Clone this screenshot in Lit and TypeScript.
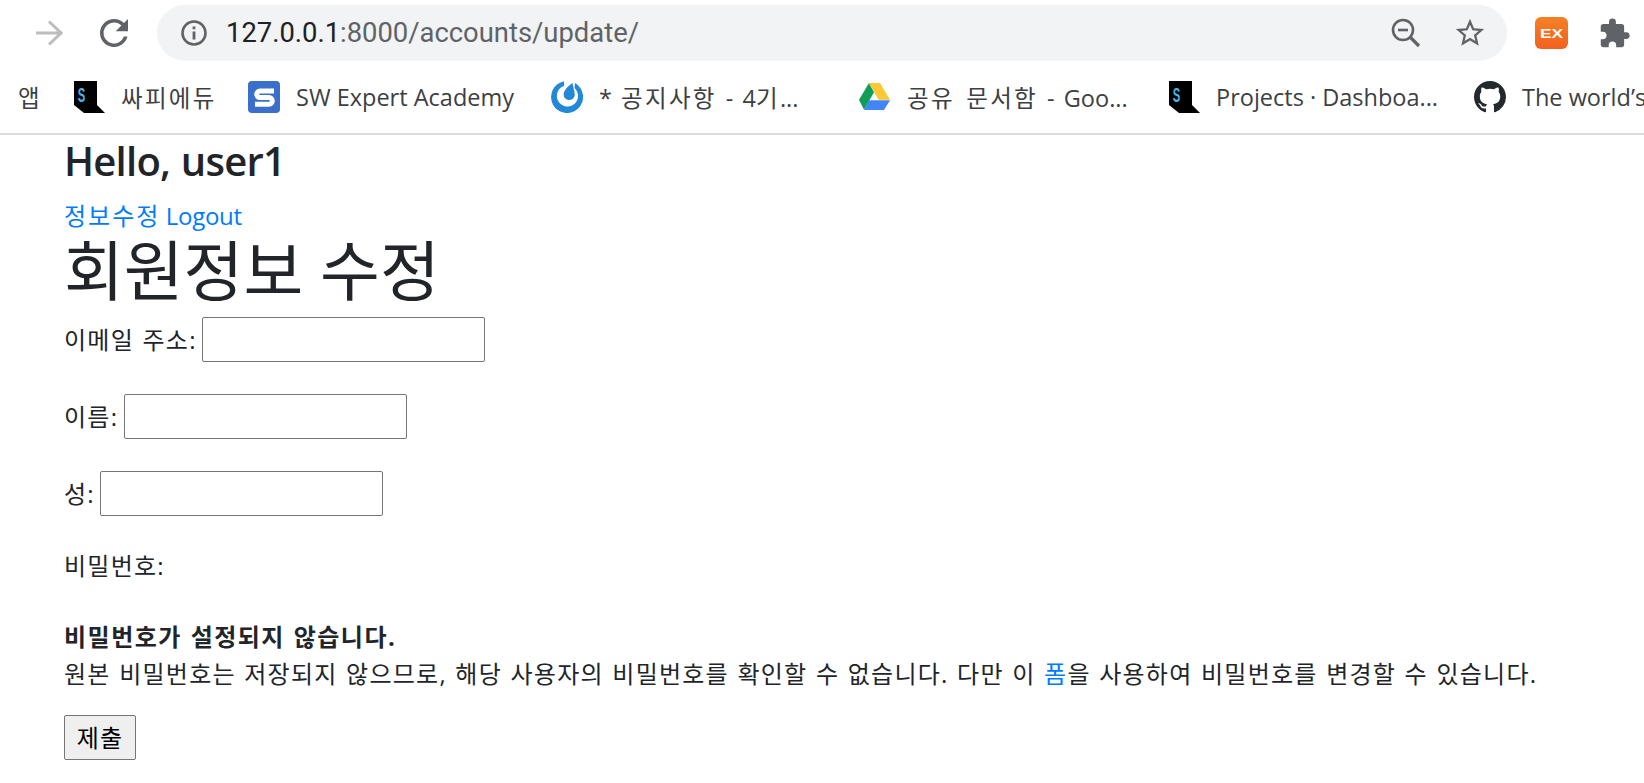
import { LitElement, html, css, svg } from 'lit';
import { customElement } from 'lit/decorators.js';

const ssafyIcon = svg`<svg viewBox="0 0 34 32" width="34" height="32">
  <path d="M2 0H25V24L33 32H12L2 24Z" fill="#000"/>
  <text x="5.7" y="20.5" font-family="Liberation Sans" font-size="20" font-weight="700" fill="#4db5e8" textLength="7.5" lengthAdjust="spacingAndGlyphs">S</text>
</svg>`;

const bookmarks = [
  { icon: ssafyIcon, label: html`<span class="ko">싸피에듀</span>`, width: 126 },
  {
    icon: svg`<svg viewBox="0 0 34 32" width="34" height="32">
      <rect width="32" height="32" x="1" rx="4" fill="#3b6fc9"/>
      <path d="M27 10H13a3.3 3.3 0 0 0 0 6.6h9a3.3 3.3 0 0 1 0 6.6H8" fill="none" stroke="#fff" stroke-width="5"/>
    </svg>`,
    label: 'SW Expert Academy',
    width: 254,
  },
  {
    icon: svg`<svg viewBox="0 0 34 32" width="34" height="32">
      <path d="M14 .3A16 16 0 1 0 25 2.1L24.5 7A10.6 10.6 0 1 1 14.2 4.8Z" fill="#2389d7"/>
      <path d="M22.5 2C23.5 8 25 11 24.7 14.5A5.6 5.6 0 0 1 13.6 13.5C14 9 18 5 22.5 2Z" fill="#2389d7"/>
    </svg>`,
    label: html`<span class="spaced">* <span class="ko">공지사항</span> - 4<span class="ko">기</span>...</span>`,
    width: 259,
  },
  {
    icon: svg`<svg viewBox="0 0 34 32" width="34" height="32">
      <path d="M11 2L1 18.7L6 28.7L16 11.3Z" fill="#0f9d58"/>
      <path d="M11 2H22L32 18.7H20.5Z" fill="#fcc934"/>
      <path d="M11 19.3H32L26 29H6Z" fill="#4285f4"/>
    </svg>`,
    label: html`<span class="spaced"><span class="ko">공유 문서함</span> - Goo...</span>`,
    width: 260,
  },
  { icon: ssafyIcon, label: 'Projects · Dashboa...', width: 257 },
  {
    icon: svg`<svg viewBox="0 0 16 16" width="34" height="32">
      <path fill="#24292e" d="M8 0C3.58 0 0 3.58 0 8c0 3.54 2.29 6.53 5.47 7.59.4.07.55-.17.55-.38 0-.19-.01-.82-.01-1.49-2.01.37-2.53-.49-2.69-.94-.09-.23-.48-.94-.82-1.13-.28-.15-.68-.52-.01-.53.63-.01 1.08.58 1.23.82.72 1.21 1.87.87 2.33.66.07-.52.28-.87.51-1.07-1.78-.2-3.64-.89-3.64-3.95 0-.87.31-1.59.82-2.15-.08-.2-.36-1.02.08-2.12 0 0 .67-.21 2.2.82.64-.18 1.32-.27 2-.27s1.36.09 2 .27c1.53-1.04 2.2-.82 2.2-.82.44 1.1.16 1.92.08 2.12.51.56.82 1.27.82 2.15 0 3.07-1.87 3.75-3.65 3.95.29.25.54.73.54 1.48 0 1.07-.01 1.93-.01 2.2 0 .21.15.46.55.38A8.01 8.01 0 0 0 16 8c0-4.42-3.58-8-8-8z"/>
    </svg>`,
    label: 'The world’s',
    width: 130,
  },
];

@customElement('app-root')
export class AppRoot extends LitElement {
  static styles = css`
    :host {
      display: block;
      height: 783px;
      overflow: hidden;
      background: #fff;
      font-family: 'Open Sans', 'Noto Sans CJK KR', sans-serif;
      color: #212529;
    }

    .toolbar {
      display: flex;
      align-items: center;
      height: 66px;
      padding-left: 35px;
      box-sizing: border-box;
    }

    .forward {
      margin-right: 30px;
    }

    .omnibox {
      display: flex;
      align-items: center;
      width: 1350px;
      height: 56px;
      margin-left: 22px;
      border-radius: 28px;
      background: #f1f3f4;
      box-sizing: border-box;
      padding: 0 20px 0 23px;
    }

    .url {
      flex: 1;
      margin-left: 18px;
      font-family: Roboto, sans-serif;
      font-size: 27.4px;
      color: #5f6368;
    }

    .url b {
      font-weight: 400;
      color: #202124;
    }

    .star {
      margin-left: 32px;
    }

    .ext {
      margin-left: 28px;
      margin-right: 30px;
    }

    .bookmarks {
      display: flex;
      align-items: center;
      height: 69px;
      padding: 0 0 6px 18px;
      box-sizing: border-box;
      border-bottom: 2px solid #dadce0;
      overflow: hidden;
      white-space: nowrap;
      font-size: 23.5px;
      color: #3c4043;
    }

    .apps {
      width: 54px;
      flex: none;
    }

    .bookmark {
      display: flex;
      align-items: center;
      gap: 15px;
      flex: none;
    }

    .bookmark svg {
      flex: none;
    }

    .ko {
      letter-spacing: 2.3px;
      word-spacing: 3px;
    }

    .spaced {
      word-spacing: 3px;
    }

    .page {
      padding: 0 64px;
      font-size: 24px;
      line-height: 36px;
      letter-spacing: 1.25px;
      word-spacing: 1px;
    }

    h3 {
      margin: 1px 0 12px;
      font-size: 40px;
      font-weight: 600;
      line-height: 50px;
      letter-spacing: -0.75px;
    }

    h1 {
      margin: 0 0 11px;
      font-size: 65px;
      font-weight: 400;
      line-height: 72px;
      letter-spacing: 0;
      word-spacing: 0;
    }

    a {
      color: #007bff;
      text-decoration: none;
    }

    .nav {
      word-spacing: -2px;
    }

    .nav-ko {
      letter-spacing: 2px;
    }

    .latin {
      letter-spacing: -0.3px;
    }

    p {
      margin: 0 0 23px;
    }

    .row {
      margin-bottom: 32px;
    }

    .password {
      margin-top: 32px;
      margin-bottom: 24px;
    }

    label {
      margin-right: -3px;
    }

    .help {
      margin-top: 34px;
      line-height: 37px;
    }

    strong {
      letter-spacing: 1.5px;
    }

    input {
      width: 283px;
      height: 45px;
      box-sizing: border-box;
      border: 1px solid #767676;
      border-radius: 2px;
      padding: 0;
      font: inherit;
      background: #fff;
    }

    button {
      width: 72px;
      height: 45px;
      padding: 0;
      border: 1px solid #767676;
      border-radius: 2px;
      background: #efefef;
      color: #000;
      font: inherit;
      letter-spacing: inherit;
    }
  `;

  render() {
    return html`
      <div class="toolbar">
        <svg class="forward" width="28" height="28" viewBox="0 0 28 28" fill="none" stroke="#bdbdbd" stroke-width="3">
          <path d="M1 14H26M14 2.5L26 14L14 25.5" />
        </svg>
        <svg width="42" height="42" viewBox="0 0 24 24">
          <path fill="#5f6368" d="M17.65 6.35A7.96 7.96 0 0 0 12 4a8 8 0 1 0 7.73 10h-2.08A6 6 0 1 1 12 6c1.66 0 3.14.69 4.22 1.78L13 11h7V4l-2.35 2.35z" />
        </svg>
        <div class="omnibox">
          <svg width="28" height="28" viewBox="0 0 28 28">
            <circle cx="14" cy="14" r="11.5" fill="none" stroke="#5f6368" stroke-width="2.6" />
            <path d="M12.6 12.5h2.8v8h-2.8zM12.6 7.5h2.8v2.8h-2.8z" fill="#5f6368" />
          </svg>
          <span class="url"><b>127.0.0.1</b>:8000/accounts/update/</span>
          <svg width="30" height="30" viewBox="0 0 30 30" fill="none" stroke="#5f6368" stroke-width="2.6">
            <circle cx="12" cy="12" r="10" />
            <path d="M7 12H17" />
            <path d="M19.5 19.5L28 28" stroke-width="3.2" />
          </svg>
          <svg class="star" width="34" height="34" viewBox="0 0 24 24">
            <path fill="#5f6368" d="M22 9.24l-7.19-.62L12 2 9.19 8.63 2 9.24l5.46 4.73L5.82 21 12 17.27 18.18 21l-1.63-7.03L22 9.24zM12 15.4l-3.76 2.27 1-4.28-3.32-2.88 4.38-.38L12 6.1l1.71 4.04 4.38.38-3.32 2.88 1 4.28L12 15.4z" />
          </svg>
        </div>
        <svg class="ext" width="33" height="32" viewBox="0 0 33 32">
          <defs>
            <linearGradient id="ex" x1="0" y1="0" x2="0" y2="1">
              <stop offset="0" stop-color="#f58025" />
              <stop offset="1" stop-color="#f4601f" />
            </linearGradient>
          </defs>
          <rect width="33" height="32" rx="6" fill="url(#ex)" />
          <text x="5" y="20.5" font-family="Liberation Sans" font-size="12" font-weight="700" fill="#fff" textLength="23" lengthAdjust="spacingAndGlyphs">EX</text>
        </svg>
        <svg width="33" height="33" viewBox="0 0 24 24">
          <path fill="#5f6368" d="M20.5 11H19V7a2 2 0 0 0-2-2h-4V3.5a2.5 2.5 0 0 0-5 0V5H4a2 2 0 0 0-2 2v3.8h1.5a2.7 2.7 0 0 1 0 5.4H2V20a2 2 0 0 0 2 2h3.8v-1.5a2.7 2.7 0 0 1 5.4 0V22H17a2 2 0 0 0 2-2v-4h1.5a2.5 2.5 0 0 0 0-5z" />
        </svg>
      </div>
      <div class="bookmarks">
        <span class="apps">앱</span>
        ${bookmarks.map(
          (b) => html`
            <div class="bookmark">
              ${b.icon}
              <span style="width: ${b.width}px">${b.label}</span>
            </div>
          `
        )}
      </div>
      <div class="page">
        <h3>Hello, user1</h3>
        <div class="nav"><a class="nav-ko" href="#">정보수정</a> <a class="latin" href="#">Logout</a></div>
        <h1>회원정보 수정</h1>
        <form>
          <p class="row"><label>이메일 주소:</label> <input type="text" /></p>
          <p class="row"><label>이름:</label> <input type="text" /></p>
          <p class="row"><label>성:</label> <input type="text" /></p>
          <p class="password">비밀번호:</p>
          <div class="help">
            <p>
              <strong>비밀번호가 설정되지 않습니다.</strong><br />
              원본 비밀번호는 저장되지 않으므로, 해당 사용자의 비밀번호를 확인할 수 없습니다. 다만 이
              <a href="#">폼</a>을 사용하여 비밀번호를 변경할 수 있습니다.
            </p>
          </div>
          <button type="button">제출</button>
        </form>
      </div>
    `;
  }
}
